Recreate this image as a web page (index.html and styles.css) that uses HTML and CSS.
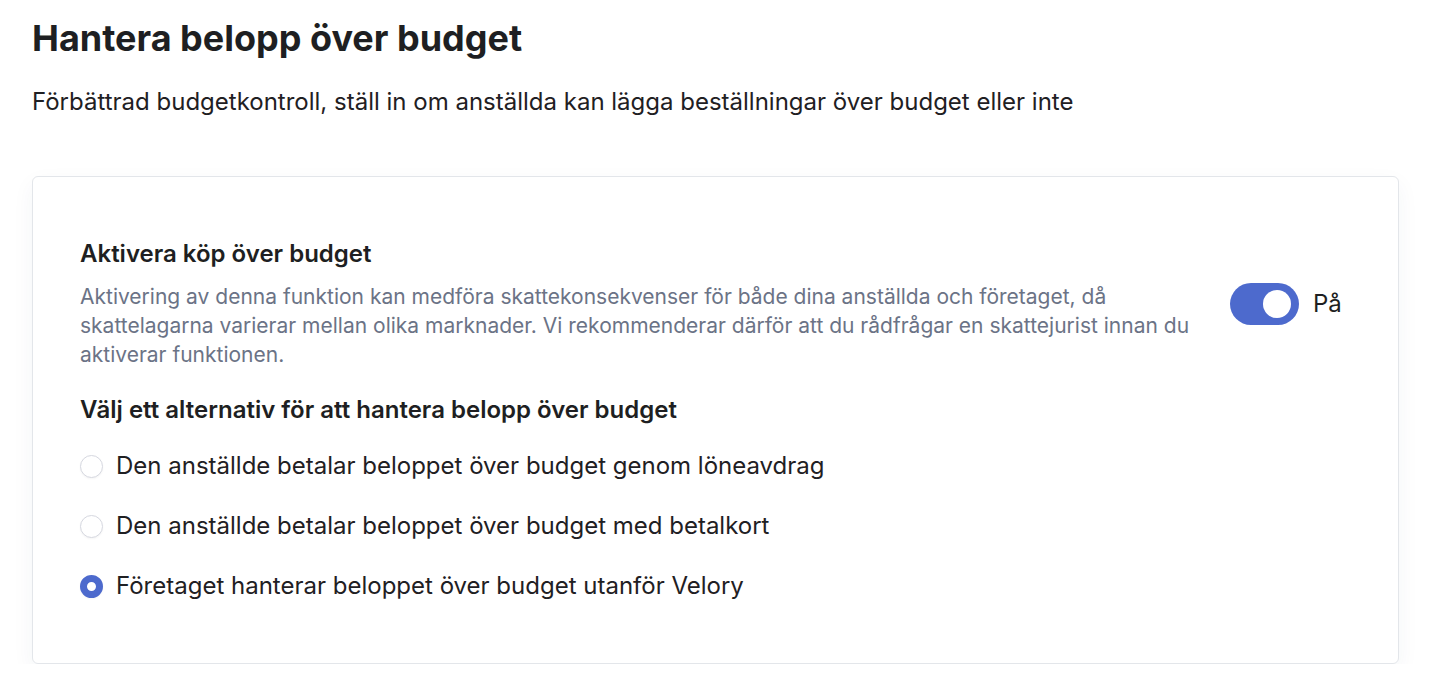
FILE: index.html
```html
<!DOCTYPE html>
<html lang="sv">
<head>
<meta charset="utf-8">
<title>Hantera belopp över budget</title>
<link rel="stylesheet" href="styles.css">
</head>
<body>
<main class="page">
  <h1 class="title">Hantera belopp över budget</h1>
  <p class="subtitle">Förbättrad budgetkontroll, ställ in om anställda kan lägga beställningar över budget eller inte</p>
  <section class="card">
    <div class="setting">
      <div class="setting-text">
        <h2 class="setting-title">Aktivera köp över budget</h2>
        <p class="setting-desc">Aktivering av denna funktion kan medföra skattekonsekvenser för både dina anställda och företaget, då skattelagarna varierar mellan olika marknader. Vi rekommenderar därför att du rådfrågar en skattejurist innan du aktiverar funktionen.</p>
      </div>
      <label class="toggle-wrap">
        <span class="toggle"><span class="knob"></span></span>
        <span class="toggle-label">På</span>
      </label>
    </div>
    <h3 class="options-title">Välj ett alternativ för att hantera belopp över budget</h3>
    <ul class="options">
      <li class="option"><span class="radio"></span><span class="option-text">Den anställde betalar beloppet över budget genom löneavdrag</span></li>
      <li class="option"><span class="radio"></span><span class="option-text">Den anställde betalar beloppet över budget med betalkort</span></li>
      <li class="option"><span class="radio checked"></span><span class="option-text">Företaget hanterar beloppet över budget utanför Velory</span></li>
    </ul>
  </section>
</main>
</body>
</html>
```
FILE: styles.css
```css
* { box-sizing: border-box; }
html, body { margin: 0; padding: 0; background: #ffffff; }
body {
  font-family: Inter, "Noto Sans", "Liberation Sans", sans-serif;
  color: #1f2023;
}
.page {
  padding: 16px 37px 0 32px;
}
.title {
  margin: 0;
  font-size: 36px;
  line-height: 44px;
  font-weight: 700;
  color: #1e1f22;
}
.subtitle {
  margin: 26px 0 0 0;
  font-size: 24px;
  line-height: 32px;
  font-weight: 400;
  color: #1f2023;
}
.card {
  margin-top: 58px;
  width: 1367px;
  border: 1px solid #e3e6ea;
  border-radius: 6px;
  background: #fff;
  box-shadow: 0 8px 22px rgba(30, 50, 90, 0.05);
  padding: 61px 47px 61px 47px;
}
.setting {
  display: flex;
  align-items: center;
  gap: 30px;
}
.setting-text { flex: 0 0 1120px; }
.setting-title {
  margin: 0;
  font-size: 24px;
  line-height: 32px;
  font-weight: 600;
  color: #1e1f22;
}
.setting-desc {
  margin: 12px 0 0 0;
  font-size: 21px;
  line-height: 29px;
  color: #6b7386;
}
.toggle-wrap {
  display: flex;
  align-items: center;
  gap: 14px;
}
.toggle {
  width: 69px;
  height: 42px;
  border-radius: 21px;
  background: #4d6acd;
  display: flex;
  align-items: center;
  justify-content: flex-end;
  padding-right: 8px;
}
.knob {
  width: 28px;
  height: 28px;
  border-radius: 50%;
  background: #fff;
}
.toggle-label {
  font-size: 24px;
  line-height: 32px;
  color: #1e1f22;
}
.options-title {
  margin: 25px 0 0 0;
  font-size: 24px;
  line-height: 32px;
  font-weight: 600;
  color: #1e1f22;
}
.options {
  list-style: none;
  margin: 24px 0 0 0;
  padding: 0;
  display: flex;
  flex-direction: column;
  gap: 28px;
}
.option {
  display: flex;
  align-items: center;
  gap: 13px;
  height: 32px;
}
.radio {
  width: 23px;
  height: 23px;
  border-radius: 50%;
  border: 1px solid #d6d8e0;
  background: #fff;
  box-shadow: 0 1px 2px rgba(0,0,0,0.04);
  flex: none;
}
.radio.checked {
  border: 7px solid #4d6acd;
  background: #fff;
}
.option-text {
  font-size: 24px;
  line-height: 32px;
  color: #1f2023;
}
```
